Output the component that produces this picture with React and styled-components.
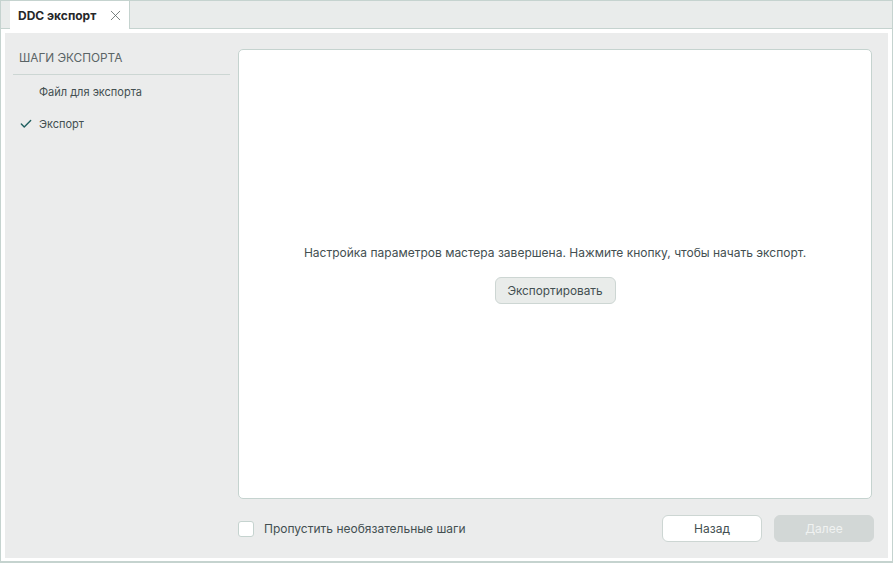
import React from "react";
import styled, { createGlobalStyle } from "styled-components";
import { X, Check } from "lucide-react";

const BORDER = "#c5d3cf";
const PANEL = "#ebecec";
const TEXT = "#434f51";

const GlobalStyle = createGlobalStyle`
  html, body {
    margin: 0;
    padding: 0;
    background: #fff;
  }
  body {
    font-family: Inter, "Noto Sans", sans-serif;
    color: ${TEXT};
  }
`;

const Window = styled.div`
  width: 893px;
  height: 563px;
  box-sizing: border-box;
  display: flex;
  flex-direction: column;
  background: #fff;
`;

const TabBar = styled.div`
  height: 29px;
  box-sizing: border-box;
  flex: none;
  display: flex;
  padding: 1px 0 0 9px;
  background: #e9eceb;
  border: 1px solid ${BORDER};
`;

const Tab = styled.div`
  width: 120px;
  height: 28px;
  margin-top: -1px;
  box-sizing: border-box;
  display: flex;
  align-items: center;
  justify-content: space-between;
  padding: 0 5px 0 8px;
  background: #fff;
  border-right: 1px solid ${BORDER};
  font-size: 12px;
  font-weight: 700;
  color: #26282a;
`;

const CloseIcon = styled(X)`
  width: 17px;
  height: 17px;
  color: #55605f;
`;

const Shell = styled.div`
  flex: 1;
  min-height: 0;
  box-sizing: border-box;
  padding: 4px 4px 3px 4px;
  border-left: 1px solid ${BORDER};
  border-right: 1px solid ${BORDER};
  border-bottom: 2px solid ${BORDER};
  display: flex;
`;

const Panel = styled.div`
  flex: 1;
  display: flex;
  background: ${PANEL};
`;

const Sidebar = styled.aside`
  width: 225px;
  flex: none;
  box-sizing: border-box;
  padding: 16px 0 0 8px;
`;

const SideTitle = styled.div`
  height: 26px;
  box-sizing: border-box;
  padding-left: 6px;
  font-size: 11.8px;
  line-height: 18px;
  color: #5a6466;
  border-bottom: 1px solid #ccd6d3;
`;

const StepList = styled.div`
  display: flex;
  flex-direction: column;
  padding-top: 1px;
`;

const Step = styled.div`
  height: 32px;
  display: flex;
  align-items: center;
  padding-left: 6px;
  font-size: 11px;
  color: ${TEXT};
`;

const StepMark = styled.span`
  width: 20px;
  display: flex;
  align-items: center;
`;

const CheckMark = styled(Check)`
  width: 14px;
  height: 14px;
  color: #1f5f5f;
`;

const Content = styled.div`
  flex: 1;
  min-width: 0;
  box-sizing: border-box;
  padding: 16px 16px 16px 8px;
  display: flex;
  flex-direction: column;
`;

const Card = styled.main`
  height: 450px;
  box-sizing: border-box;
  background: #fff;
  border: 1px solid ${BORDER};
  border-radius: 5px;
  display: flex;
  flex-direction: column;
  align-items: center;
  justify-content: center;
`;

const Message = styled.div`
  font-size: 12px;
  line-height: 18px;
  color: ${TEXT};
  margin-bottom: 15px;
`;

const ExportButton = styled.button`
  width: 121px;
  height: 27px;
  padding: 0;
  border: 1px solid #cdd6d3;
  border-radius: 6px;
  background: #e9ecea;
  font: inherit;
  font-size: 11.8px;
  color: ${TEXT};
`;

const Footer = styled.div`
  flex: 1;
  display: flex;
  align-items: center;
  justify-content: space-between;
  margin-right: -2px;
  padding-top: 16px;
  box-sizing: border-box;
`;

const SkipLabel = styled.label`
  display: flex;
  align-items: center;
  gap: 10px;
  font-size: 12px;
  color: ${TEXT};
`;

const Box = styled.span`
  width: 16px;
  height: 16px;
  box-sizing: border-box;
  background: #fff;
  border: 1px solid ${BORDER};
  border-radius: 3px;
`;

const Actions = styled.div`
  display: flex;
  gap: 12px;
`;

const NavButton = styled.button`
  width: 100px;
  height: 27px;
  padding: 0;
  border-radius: 6px;
  font: inherit;
  font-size: 12px;
  border: 1px solid ${(p) => (p.disabled ? "#d2d7d6" : "#cdd6d3")};
  background: ${(p) => (p.disabled ? "#d2d7d6" : "#fff")};
  color: ${(p) => (p.disabled ? "#f0f2f1" : TEXT)};
`;

export default function App() {
  return (
    <>
      <GlobalStyle />
      <Window>
        <TabBar>
          <Tab>
            DDC экспорт
            <CloseIcon strokeWidth={1.1} />
          </Tab>
        </TabBar>
        <Shell>
          <Panel>
            <Sidebar>
              <SideTitle>ШАГИ ЭКСПОРТА</SideTitle>
              <StepList>
                <Step>
                  <StepMark />
                  Файл для экспорта
                </Step>
                <Step>
                  <StepMark>
                    <CheckMark strokeWidth={2.4} />
                  </StepMark>
                  Экспорт
                </Step>
              </StepList>
            </Sidebar>
            <Content>
              <Card>
                <Message>
                  Настройка параметров мастера завершена. Нажмите кнопку, чтобы начать экспорт.
                </Message>
                <ExportButton>Экспортировать</ExportButton>
              </Card>
              <Footer>
                <SkipLabel>
                  <Box />
                  Пропустить необязательные шаги
                </SkipLabel>
                <Actions>
                  <NavButton>Назад</NavButton>
                  <NavButton disabled>Далее</NavButton>
                </Actions>
              </Footer>
            </Content>
          </Panel>
        </Shell>
      </Window>
    </>
  );
}
